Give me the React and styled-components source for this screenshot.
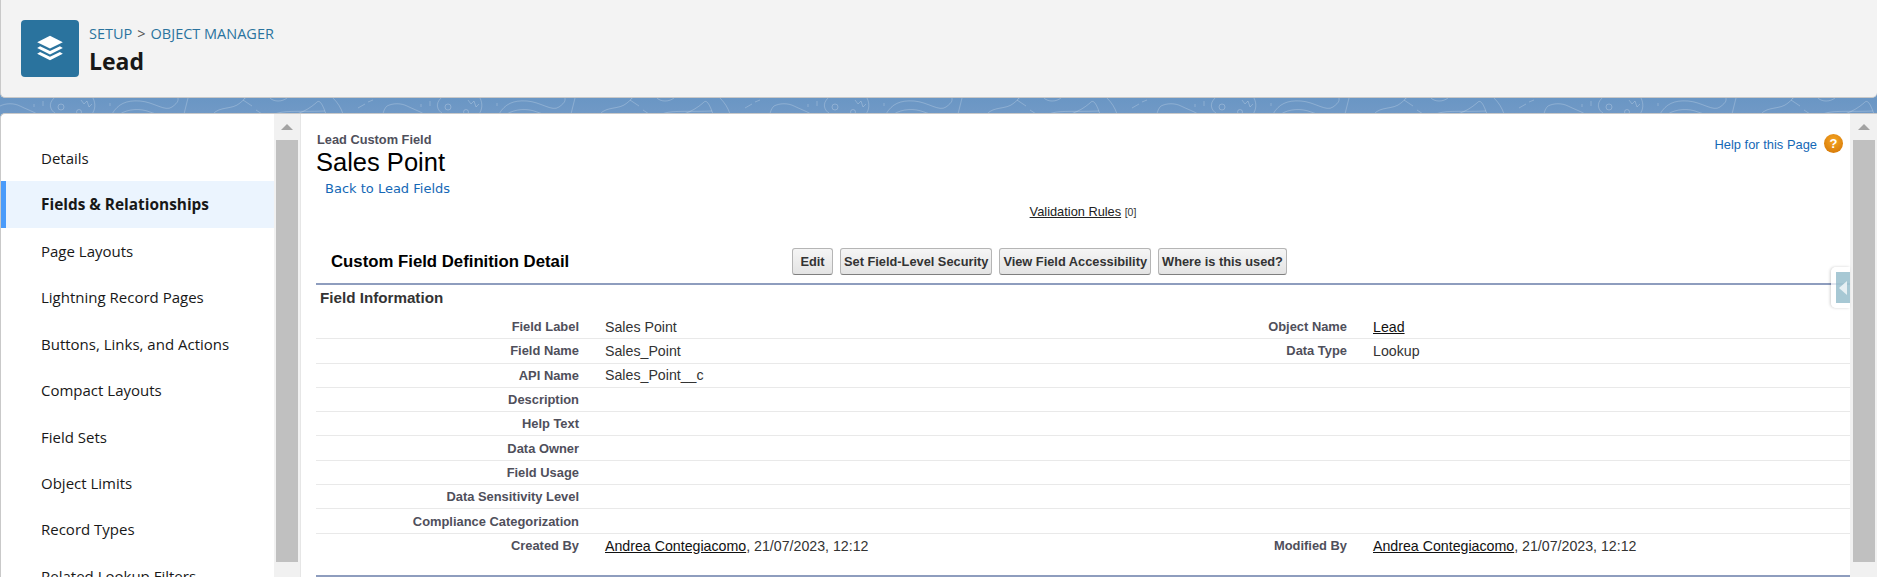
import React from 'react'
import styled, { createGlobalStyle } from 'styled-components'

const GlobalStyle = createGlobalStyle`
  html, body {
    margin: 0;
    height: 577px;
    overflow: hidden;
    background: #6f9ac6;
  }
  #root { height: 577px; }
`

const Page = styled.div`
  display: grid;
  grid-template-rows: 98px 15px 1fr;
  height: 577px;
  overflow: hidden;
`

const Header = styled.header`
  display: flex;
  align-items: center;
  gap: 10px;
  padding: 0 0 1px 20px;
  background: #f3f3f3;
  border: 1px solid #c9c9c9;
  border-top: none;
  border-right: none;
  border-radius: 0 0 5px 5px;
  box-sizing: border-box;
`

const IconTile = styled.div`
  display: flex;
  align-items: center;
  justify-content: center;
  width: 58px;
  height: 57px;
  background: #2a739e;
  border-radius: 4px;
`

const Titles = styled.div`
  display: flex;
  flex-direction: column;
  padding-top: 4px;
`

const Crumbs = styled.div`
  font-family: "Open Sans", sans-serif;
  font-size: 14.5px;
  line-height: 20px;
  color: #2a739e;
  span { color: #555; margin: 0 5px; }
`

const ObjectName = styled.h1`
  margin: 1px 0 0;
  font-family: "Open Sans", sans-serif;
  font-size: 23px;
  line-height: 32px;
  font-weight: 700;
  color: #181818;
`

const Band = styled.svg`
  display: block;
  width: 100%;
  height: 15px;
`

const Panels = styled.div`
  display: grid;
  grid-template-columns: 300px 1fr;
  min-height: 0;
  background: #fff;
  border-top: 1px solid #c9c9c9;
  border-left: 1px solid #c9c9c9;
  border-radius: 5px 0 0 0;
  overflow: hidden;
`

const Sidebar = styled.nav`
  display: grid;
  grid-template-columns: 1fr 26px;
  min-height: 0;
  border-right: 1px solid #e6e6e6;
`

const NavList = styled.ul`
  margin: 0;
  padding: 21px 0 0;
  list-style: none;
`

const NavItem = styled.li`
  display: flex;
  align-items: center;
  height: 46.4px;
  padding-left: ${p => (p.$active ? '35px' : '40px')};
  font-family: "Open Sans", sans-serif;
  font-size: ${p => (p.$active ? '15.4px' : '15px')};
  font-weight: ${p => (p.$active ? 700 : 400)};
  color: #181818;
  background: ${p => (p.$active ? '#ebf4fe' : 'transparent')};
  border-left: ${p => (p.$active ? '5px solid #4a9bfa' : 'none')};
  white-space: nowrap;
`

const ScrollTrack = styled.div`
  display: flex;
  flex-direction: column;
  align-items: center;
  padding-top: 10px;
  background: #f1f1f1;
  box-sizing: border-box;
`

const ScrollArrow = styled.div`
  width: 0;
  height: 0;
  border-left: 6px solid transparent;
  border-right: 6px solid transparent;
  border-bottom: 6px solid #a3a3a3;
`

const ScrollThumb = styled.div`
  width: 22px;
  height: 422px;
  margin-top: 10px;
  background: #c0c0c0;
`

const ContentWrap = styled.div`
  display: grid;
  grid-template-columns: 1fr 27px;
  min-height: 0;
`

const Content = styled.main`
  position: relative;
  padding: 19px 0 0 15px;
  font-family: "Liberation Sans", Arial, sans-serif;
  min-width: 0;
`

const TopRow = styled.div`
  display: flex;
  justify-content: space-between;
`

const Kicker = styled.div`
  padding-left: 1px;
  font-size: 12.8px;
  line-height: 14px;
  font-weight: 700;
  color: #4f4f5b;
`

const PageTitle = styled.h2`
  margin: 0;
  font-size: 25.5px;
  line-height: 30px;
  font-weight: 400;
  color: #000;
`

const HelpLink = styled.a`
  display: flex;
  align-items: flex-start;
  gap: 7px;
  height: 20px;
  margin-top: 1px;
  padding-right: 7px;
  font-size: 12.9px;
  color: #1468b6;
`

const HelpText = styled.span`
  margin-top: 3px;
`

const HelpIcon = styled.span`
  display: flex;
  align-items: center;
  justify-content: center;
  width: 19px;
  height: 19px;
  border-radius: 50%;
  background: radial-gradient(circle at 50% 35%, #f6a623, #d87c0a 80%);
  color: #fff;
  font-size: 13px;
  font-weight: 700;
`

const BackLink = styled.a`
  display: block;
  margin: 4px 0 0 9px;
  font-family: "DejaVu Sans", Verdana, sans-serif;
  font-size: 13px;
  line-height: 16px;
  color: #1468b6;
`

const RelatedRow = styled.div`
  margin-top: 8px;
  text-align: center;
  font-size: 12.8px;
  line-height: 14px;
  color: #333;
  u { color: #222; }
  small { font-size: 10.5px; }
`

const BlockHead = styled.div`
  display: grid;
  grid-template-columns: 476px 1fr;
  align-items: center;
  height: 44px;
  margin-top: 20px;
  border-bottom: 2px solid #8e9dbe;
`

const BlockTitle = styled.h3`
  margin: 2px 0 0 15px;
  font-size: 16.75px;
  font-weight: 700;
  color: #000;
`

const Buttons = styled.div`
  display: flex;
  gap: 7px;
`

const Button = styled.button`
  min-width: 41px;
  height: 27px;
  padding: 0 3px;
  font-family: "Liberation Sans", Arial, sans-serif;
  font-size: 12.8px;
  font-weight: 700;
  color: #333;
  background: linear-gradient(#f5f5f5, #e4e4e4);
  border: 1px solid #b5b5b5;
  border-bottom-color: #7f7f7f;
  border-radius: 3px;
  white-space: nowrap;
`

const SectionTitle = styled.h4`
  margin: 0;
  padding: 3px 0 0 4px;
  height: 30px;
  box-sizing: border-box;
  font-size: 15.2px;
  line-height: 20px;
  font-weight: 700;
  color: #333;
`

const Row = styled.div`
  display: grid;
  grid-template-columns: 263px 454px 262px 1fr;
  column-gap: 26px;
  height: ${p => (p.$tall ? '41.5px' : '24.3px')};
  align-items: ${p => (p.$tall ? 'start' : 'center')};
  padding-top: ${p => (p.$tall ? '4px' : '0')};
  box-sizing: border-box;
  border-bottom: ${p => (p.$last ? 'none' : '1px solid #e9e9e9')};
`

const Label = styled.div`
  font-size: 12.9px;
  font-weight: 700;
  text-align: right;
  color: #4f4f5b;
`

const Value = styled.div`
  font-size: 14.2px;
  color: #333;
  u { color: #111; }
`

const BlockFoot = styled.div`
  border-top: 2px solid #8e9dbe;
`

const SideTab = styled.div`
  position: absolute;
  right: 0;
  top: 153px;
  display: flex;
  justify-content: flex-end;
  align-items: center;
  width: 19px;
  height: 41px;
  background: rgba(255, 255, 255, 0.75);
  border-radius: 5px 0 0 5px;
  box-shadow: -1px 0 3px rgba(0, 0, 0, 0.18);
`

const SideTabInner = styled.div`
  display: flex;
  align-items: center;
  justify-content: center;
  width: 14px;
  height: 31px;
  background: rgba(130, 176, 194, 0.7);
`

const SideTabArrow = styled.div`
  width: 0;
  height: 0;
  border-top: 7px solid transparent;
  border-bottom: 7px solid transparent;
  border-right: 8px solid #e6eff3;
`

const navItems = [
  'Details',
  'Fields & Relationships',
  'Page Layouts',
  'Lightning Record Pages',
  'Buttons, Links, and Actions',
  'Compact Layouts',
  'Field Sets',
  'Object Limits',
  'Record Types',
  'Related Lookup Filters',
]

const rows = [
  ['Field Label', 'Sales Point', 'Object Name', <u key="l">Lead</u>],
  ['Field Name', 'Sales_Point', 'Data Type', 'Lookup'],
  ['API Name', 'Sales_Point__c'],
  ['Description'],
  ['Help Text'],
  ['Data Owner'],
  ['Field Usage'],
  ['Data Sensitivity Level'],
  ['Compliance Categorization'],
]

const stamp = <><u>Andrea Contegiacomo</u>, 21/07/2023, 12:12</>

const StackIcon = () => (
  <svg width="28" height="28" viewBox="0 0 24 24" fill="#fff">
    <path d="M12 1.5 23 7l-11 5.5L1 7z" />
    <path d="M3.5 10.4 12 14.6l8.500-4.200L23 12l-11 5.500L1 12z" />
    <path d="M3.500 15.400 12 19.600l8.500-4.200L23 17l-11 5.500L1 17z" />
  </svg>
)

// contour lines of the header texture, repeats every 387px
const BandTexture = () => (
  <Band aria-hidden="true">
    <defs>
      <linearGradient id="bandFill" x1="0" y1="0" x2="0" y2="1">
        <stop offset="0" stopColor="#6a96c4" />
        <stop offset="1" stopColor="#7099c6" />
      </linearGradient>
      <pattern id="contours" width="387" height="15" patternUnits="userSpaceOnUse">
        <g fill="none" stroke="#fff" strokeOpacity="0.22" strokeWidth="1">
          <path d="M0 8C6 5 14 5 20 8S32 13 37 16" />
          <path d="M34 6v3M43 3v5" />
          <path d="M54 0C48 6 50 12 56 16" />
          <circle cx="61" cy="9" r="3" />
          <path d="M81 2l3 4 3-3 2 6 3-3M93 0c3 6 2 12-1 16" />
          <circle cx="79" cy="14" r="2.500" />
          <path d="M110 5v3" />
          <path d="M112 16c6-10 14-14 28-13s25 11 32 6 6-7 6-9" />
          <path d="M120 16c8-5 20-6 30-2l6 2" />
          <path d="M188 0l-4 16" />
          <path d="M213 16c7-8 19-4 27-11s4-4 4-5M243 2l9 6M256 12l6 4" />
          <path d="M270 0c4 4 12 4 17 0" />
          <path d="M297 16c8-3 13-6 19-11 4-5 7 3 10 11M275 16c10-4 25-2 50-3" />
          <path d="M333 0c5 5 8 10 10 16" />
          <path d="M358 10l7-4M368 4l5-2" />
          <path d="M383 16c1-5 3-7 4-8" />
        </g>
      </pattern>
    </defs>
    <rect width="100%" height="100%" fill="url(#bandFill)" />
    <rect width="100%" height="100%" fill="url(#contours)" />
  </Band>
)

export default function App() {
  return (
    <Page>
      <GlobalStyle />
      <Header>
        <IconTile><StackIcon /></IconTile>
        <Titles>
          <Crumbs>SETUP<span>&gt;</span>OBJECT MANAGER</Crumbs>
          <ObjectName>Lead</ObjectName>
        </Titles>
      </Header>
      <BandTexture />
      <Panels>
        <Sidebar>
          <NavList>
            {navItems.map((item, i) => (
              <NavItem key={item} $active={i === 1}>{item}</NavItem>
            ))}
          </NavList>
          <ScrollTrack>
            <ScrollArrow />
            <ScrollThumb />
          </ScrollTrack>
        </Sidebar>
        <ContentWrap>
          <Content>
            <TopRow>
              <div>
                <Kicker>Lead Custom Field</Kicker>
                <PageTitle>Sales Point</PageTitle>
              </div>
              <HelpLink><HelpText>Help for this Page</HelpText><HelpIcon>?</HelpIcon></HelpLink>
            </TopRow>
            <BackLink>Back to Lead Fields</BackLink>
            <RelatedRow><u>Validation Rules</u> <small>[0]</small></RelatedRow>
            <BlockHead>
              <BlockTitle>Custom Field Definition Detail</BlockTitle>
              <Buttons>
                <Button>Edit</Button>
                <Button>Set Field-Level Security</Button>
                <Button>View Field Accessibility</Button>
                <Button>Where is this used?</Button>
              </Buttons>
            </BlockHead>
            <SectionTitle>Field Information</SectionTitle>
            {rows.map(r => (
              <Row key={r[0]}>
                <Label>{r[0]}</Label>
                <Value>{r[1]}</Value>
                <Label>{r[2]}</Label>
                <Value>{r[3]}</Value>
              </Row>
            ))}
            <Row $tall $last>
              <Label>Created By</Label>
              <Value>{stamp}</Value>
              <Label>Modified By</Label>
              <Value>{stamp}</Value>
            </Row>
            <BlockFoot />
            <SideTab><SideTabInner><SideTabArrow /></SideTabInner></SideTab>
          </Content>
          <ScrollTrack>
            <ScrollArrow />
            <ScrollThumb />
          </ScrollTrack>
        </ContentWrap>
      </Panels>
    </Page>
  )
}
